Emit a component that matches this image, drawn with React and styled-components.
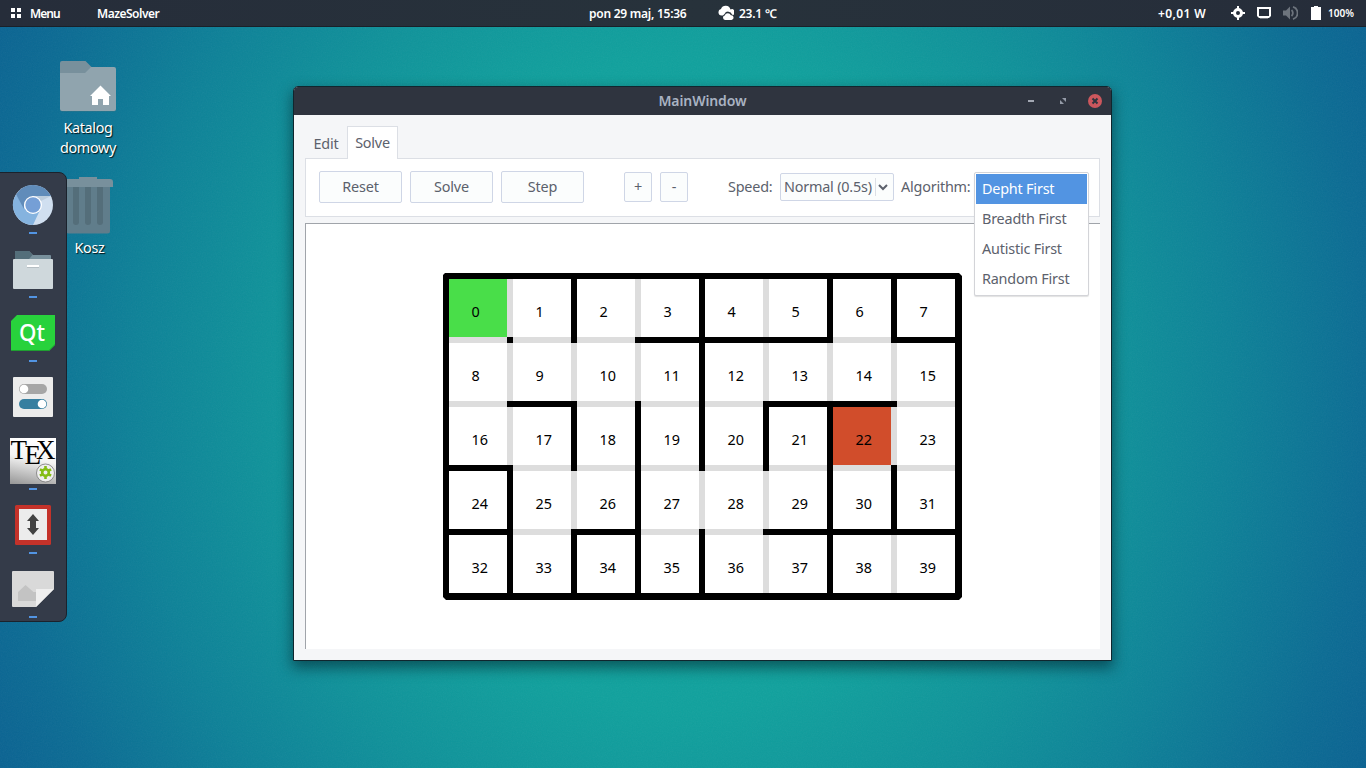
import React from "react";
import styled, { createGlobalStyle } from "styled-components";

const Global = createGlobalStyle`
  * { box-sizing: border-box; }
  html, body { margin: 0; padding: 0; overflow: hidden; }
  body { font-family: "Noto Sans", "Open Sans", sans-serif; }
`;

const Desktop = styled.div`
  position: relative;
  width: 1366px;
  height: 768px;
  overflow: hidden;
  background: radial-gradient(ellipse 760px 860px at 683px 384px,
    #0fa59e 0%, #10a19d 38%, #0f929a 56%, #0d8298 72%, #0b6c94 90%, #0a6392 100%);
`;

const Weave = styled.svg`
  position: absolute;
  inset: 0;
  opacity: 0.06;
`;

const TopBar = styled.header`
  position: relative;
  display: grid;
  grid-template-columns: 1fr auto 1fr;
  height: 27px;
  background: linear-gradient(90deg, #262d3a, #27323b 50%, #262d3a);
  border-bottom: 1px solid #1a2029;
  color: #fff;
  font-weight: 600;
  line-height: 25px;
  white-space: nowrap;
`;

const BarGroup = styled.div`
  display: flex;
  align-items: center;
  justify-content: ${(p) => (p.$end ? "flex-end" : "flex-start")};
  padding: 0 ${(p) => (p.$end ? 12 : 0)}px 0 ${(p) => (p.$end ? 0 : 11)}px;
  height: 26px;
  svg { display: block; flex: none; }
`;

const BarText = styled.span`
  display: block;
  width: ${(p) => p.$w}px;
  margin-left: ${(p) => p.$gap || 0}px;
  font-size: ${(p) => p.$size || 12}px;
  letter-spacing: ${(p) => p.$track || 0}px;
`;

const DesktopItem = styled.div`
  position: absolute;
  left: ${(p) => p.$x}px;
  top: ${(p) => p.$y}px;
  width: 80px;
  display: flex;
  flex-direction: column;
  align-items: center;
  color: #fff;
  font-size: 14.4px;
  letter-spacing: -0.35px;
  line-height: 20px;
  text-align: center;
  text-shadow: 1px 1px 1px rgba(0, 0, 0, 0.85);
  svg { display: block; }
`;

const DesktopLabel = styled.span`
  margin-top: ${(p) => p.$gap}px;
  padding-left: ${(p) => p.$nudge || 0}px;
`;

const Dock = styled.nav`
  position: absolute;
  left: -1px;
  top: 172px;
  width: 68px;
  height: 450px;
  padding-top: 9px;
  display: flex;
  flex-direction: column;
  background: #343b49;
  border: 1px solid #1b222c;
  border-radius: 0 8px 8px 0;
`;

const DockItem = styled.div`
  flex: none;
  height: 64px;
  width: 66px;
  display: flex;
  flex-direction: column;
  align-items: center;
  svg { display: block; overflow: visible; }
`;

const Running = styled.i`
  width: 8px;
  height: 2px;
  margin-top: 2px;
  background: #5294e2;
`;

const Window = styled.section`
  position: absolute;
  left: 293px;
  top: 86px;
  width: 819px;
  height: 575px;
  display: flex;
  flex-direction: column;
  background: #f5f6f8;
  border: 1px solid #10262e;
  border-radius: 5px 5px 0 0;
  box-shadow: 0 6px 14px 1px rgba(0, 20, 30, 0.5);
  color: #5c616c;
  font-size: 14.4px;
  letter-spacing: -0.2px;
`;

const TitleBar = styled.div`
  display: grid;
  grid-template-columns: 1fr auto 1fr;
  align-items: center;
  height: 28px;
  background: #2f343f;
  border-radius: 4px 4px 0 0;
  color: #a9b2c2;
  font-size: 14px;
  letter-spacing: -0.1px;
  font-weight: 600;
  line-height: 28px;
`;

const TitleText = styled.span`
  grid-column: 2;
`;

const WindowControls = styled.div`
  display: flex;
  justify-content: flex-end;
  padding-right: 7px;
  svg { display: block; }
`;

const Body = styled.div`
  display: flex;
  flex-direction: column;
  padding: 11px 11px 0;
`;

const Tabs = styled.div`
  display: flex;
  height: 33px;
  position: relative;
  z-index: 1;
  margin-bottom: -1px;
`;

const Tab = styled.div`
  width: ${(p) => p.$w}px;
  text-align: center;
  line-height: ${(p) => (p.$active ? 31 : 35)}px;
  ${(p) => p.$active && `
    background: #fff;
    border: 1px solid #dcdfe5;
    border-bottom: 0;
  `}
`;

const Toolbar = styled.div`
  display: flex;
  align-items: center;
  height: 59px;
  padding: 0 13px 2px;
  background: #fff;
  border: 1px solid #dcdfe5;
`;

const Button = styled.button`
  width: ${(p) => (p.$small ? 28 : 83)}px;
  height: ${(p) => (p.$small ? 30 : 32)}px;
  margin: 0 ${(p) => (p.$after === undefined ? 8 : p.$after)}px 0 0;
  padding: 0 0 1px;
  flex: none;
  background: #fbfdfd;
  border: 1px solid #cfd6e6;
  border-radius: 2px;
  color: #5c616c;
  font: inherit;
  letter-spacing: -0.15px;
`;

const FieldLabel = styled.span`
  width: ${(p) => p.$w}px;
  flex: none;
  line-height: 19px;
  white-space: nowrap;
`;

const Select = styled.div`
  display: flex;
  align-items: center;
  width: 114px;
  height: 28px;
  margin-right: 7px;
  padding-left: 3px;
  background: #fbfdfd;
  border: 1px solid #cfd6e6;
  border-radius: 2px;
  white-space: nowrap;
`;

const SelectValue = styled.span`
  width: 91px;
  line-height: 19px;
`;

const SelectArrow = styled.span`
  display: flex;
  align-items: center;
  height: 18px;
  padding: 1px 0 0 2px;
  border-left: 1px solid #dcdfe5;
`;

const Popup = styled.ul`
  position: absolute;
  left: 680px;
  top: 85px;
  width: 115px;
  height: 124px;
  margin: 0;
  padding: 1px;
  z-index: 3;
  list-style: none;
  background: #fff;
  border: 1px solid #d3d4d8;
  border-radius: 2px;
  box-shadow: 0 1px 1px rgba(0, 0, 0, 0.12);
`;

const Option = styled.li`
  height: 30px;
  padding-left: 6px;
  line-height: 29px;
  background: ${(p) => (p.$on ? "#5294e2" : "#fff")};
  color: ${(p) => (p.$on ? "#fff" : "#5c616c")};
`;

const Canvas = styled.div`
  display: flex;
  justify-content: flex-start;
  height: 426px;
  margin-top: 6px;
  padding: 49px 0 0 137px;
  background: #fff;
  border: solid #a0a4aa;
  border-width: 1px 0 0 1px;
`;

const Maze = styled.div`
  display: grid;
  grid-template-columns: repeat(7, 58px 6px) 58px;
  grid-template-rows: repeat(4, 58px 6px) 58px;
  width: 519px;
  height: 327px;
  padding: 6px 7px 7px 6px;
  background: #000;
  clip-path: polygon(2px 0, 516px 0, 519px 3px, 519px 324px, 516px 327px, 3px 327px, 0 324px, 0 2px);
`;

const Cell = styled.div`
  padding-left: 22.5px;
  line-height: 65px;
  letter-spacing: 0;
  height: 58px;
  background: ${(p) => p.$fill};
  color: #000;
`;

const Passage = styled.div`
  background: ${(p) => (p.$open ? "#ddd" : "#000")};
`;

/* 1 marks a wall: SIDE is to the right of a cell, BELOW is under it */
const SIDE = ["0101011", "0001000", "0111110", "1010011", "1111010"];
const BELOW = ["00011101", "01000110", "10000000", "10100111"];
const FILL = { 0: "#49de49", 22: "#d14d2b" };

function mazeParts() {
  const parts = [];
  for (let r = 0; r < 5; r++) {
    for (let c = 0; c < 8; c++) {
      const n = r * 8 + c;
      parts.push(<Cell key={n} $fill={FILL[n] || "#fff"}>{n}</Cell>);
      if (c < 7) parts.push(<Passage key={`s${n}`} $open={SIDE[r][c] === "0"} />);
    }
    if (r < 4) {
      for (let c = 0; c < 8; c++) {
        parts.push(<Passage key={`b${r}-${c}`} $open={BELOW[r][c] === "0"} />);
        if (c < 7) parts.push(<Passage key={`j${r}-${c}`} />);
      }
    }
  }
  return parts;
}

const HomeFolder = () => (
  <svg width="58" height="52" viewBox="0 0 58 52">
    <rect x="1" y="8" width="56" height="43.5" rx="2" fill="#4a7480" opacity=".6" />
    <path d="M1 3a2 2 0 0 1 2-2h23.500l6 6H55v20H1z" fill="#78909c" />
    <path d="M1 13h25l6-6h23a2 2 0 0 1 2 2v40a2 2 0 0 1-2 2H3a2 2 0 0 1-2-2z" fill="#90a4ae" />
    <path d="M41.500 25.500 31 36h2v9h6v-6h5v6h6v-9h2z" fill="#fff" />
  </svg>
);

const Trash = () => (
  <svg width="50" height="58" viewBox="0 0 50 58">
    <path d="M3 9h44v45a2.500 2.500 0 0 1-2.500 2.500h-39A2.500 2.500 0 0 1 3 54z" fill="#607d8b" />
    <path d="M16 0h18v2h13a3 3 0 0 1 3 3v5H0V5a3 3 0 0 1 3-3h13z" fill="#78909c" />
    <path d="M10 10h6v35a3 3 0 0 1-6 0zM22 10h6v35a3 3 0 0 1-6 0zM34 10h6v35a3 3 0 0 1-6 0z" fill="#546e7a" />
  </svg>
);

const Chromium = () => (
  <svg width="48" height="48" viewBox="0 1 48 48">
    <circle cx="24" cy="24" r="20" fill="#d0dff0" />
    <path d="M24 44A20 20 0 0 1 7 13.500L16 28l15 1z" fill="#85b3df" />
    <path d="M7 13.500A20 20 0 0 1 42 15H24l-9 9v4z" fill="#608cba" />
    <path d="M24 15h18l-10 5z" fill="#bccddd" />
    <circle cx="24" cy="24" r="9" fill="#fff" />
    <circle cx="24" cy="24" r="7.700" fill="#759fd6" />
  </svg>
);

const Files = () => (
  <svg width="48" height="48" viewBox="0 0 48 48">
    <path d="M6 6a1 1 0 0 1 1-1h13l4 4h17a1 1 0 0 1 1 1v5H6z" fill="#78909c" />
    <path d="M6 6a1 1 0 0 1 1-1h13l3.500 4L20 13H6z" fill="#546e7a" />
    <rect x="4" y="13" width="40" height="30" rx="1" fill="#cfd8dc" />
    <path d="M18 19h12v2H18z" fill="#fff" /><path d="M18 21h12v1H18z" fill="#b5bec3" />
  </svg>
);

const Glyph = styled.text`
  font-family: "Noto Sans", sans-serif;
  font-weight: 500;
`;

const SerifGlyph = styled.text`
  font-family: "Liberation Serif", serif;
  font-size: 27px;
`;

const QtIcon = () => (
  <svg width="48" height="48" viewBox="0 0 48 48">
    <path d="M8 5h38v30l-6 6H2V11z" fill="#28d23c" />
    <path d="M2 40h38l6-6v1l-6 6H2z" fill="#1f9f31" />
    <Glyph x="23" y="31" fontSize="24" fill="#fff" textAnchor="middle" textLength="26" lengthAdjust="spacingAndGlyphs">Qt</Glyph>
  </svg>
);

const Tweaks = () => (
  <svg width="48" height="48" viewBox="0 0 48 48">
    <rect x="4" y="3" width="40" height="40" rx="1" fill="#ececec" />
    <rect x="10" y="10" width="28" height="10" rx="5" fill="#a6a6a6" />
    <circle cx="15" cy="15" r="4.300" fill="#fff" />
    <rect x="10" y="25" width="28" height="10" rx="5" fill="#377fa0" />
    <circle cx="33" cy="30" r="4.300" fill="#fff" />
  </svg>
);

const TexIcon = () => (
  <svg width="48" height="48" viewBox="0 0 48 48">
    <defs>
      <linearGradient id="tex" x1="0.300" y1="0" x2="0.100" y2="1">
        <stop offset="0" stopColor="#fff" /><stop offset=".4" stopColor="#f4f4f4" /><stop offset="1" stopColor="#999" />
      </linearGradient>
    </defs>
    <rect x="1" y="0" width="46" height="46" fill="url(#tex)" />
    <SerifGlyph x="1.500" y="20.500">T<tspan dx="-2.500" dy="5">E</tspan><tspan dx="-5" dy="-5">X</tspan></SerifGlyph>
    <circle cx="36.500" cy="35" r="9" fill="#eee" stroke="#777" strokeWidth=".8" />
    <circle cx="36.500" cy="34.500" r="3.300" fill="none" stroke="#84bd14" strokeWidth="2.600" />
    <path d="M36.500 28v3M36.500 38v3M30.900 31.300l2.500 1.400M39.600 36.300l2.500 1.400M42.100 31.300l-2.500 1.400M33.400 36.300l-2.500 1.400" stroke="#84bd14" strokeWidth="2.600" />
  </svg>
);

const ResizeIcon = () => (
  <svg width="48" height="48" viewBox="0 0 48 48">
    <rect x="6" y="3" width="36" height="40" rx="1.500" fill="#c4322a" />
    <rect x="10" y="7" width="28" height="31" fill="#ececec" />
    <path d="M24 12l6 7h-3v7h3l-6 7-6-7h3v-7h-3z" fill="#424242" />
  </svg>
);

const ImageIcon = () => (
  <svg width="48" height="48" viewBox="0 0 48 48">
    <path d="M4 5h40a1 1 0 0 1 1 1v17L27 41H4a1 1 0 0 1-1-1V6a1 1 0 0 1 1-1z" fill="#d9d9d9" />
    <path d="M9 35V26l7.500-7 8 7h2.500v9z" fill="#c3c3c3" />
    <path d="M27 23h18L27 41z" fill="#efefef" />
  </svg>
);

const DOCK = [
  { Icon: Chromium, running: true },
  { Icon: Files, running: true },
  { Icon: QtIcon, running: true },
  { Icon: Tweaks, running: false },
  { Icon: TexIcon, running: true },
  { Icon: ResizeIcon, running: true },
  { Icon: ImageIcon, running: true },
];

export default function App() {
  return (
    <Desktop>
      <Global />
      <Weave width="1366" height="768">
        <filter id="grain"><feTurbulence type="fractalNoise" baseFrequency="0.8" numOctaves="2" seed="4" /><feColorMatrix type="saturate" values="0" /></filter>
        <rect width="1366" height="768" filter="url(#grain)" />
      </Weave>
      <TopBar>
        <BarGroup>
          <svg width="10" height="10" viewBox="0 0 10 10"><path d="M0 0h4v4H0zM6 0h4v4H6zM0 6h4v4H0zM6 6h4v4H6z" fill="#fff" /></svg>
          <BarText $gap={9} $w={67} $track={-0.9}>Menu</BarText>
          <BarText $w={80} $track={-0.5}>MazeSolver</BarText>
        </BarGroup>
        <BarGroup>
          <BarText $w={129} $track={-0.25}>pon 29 maj, 15:36</BarText>
          <svg width="16" height="16" viewBox="0 0 16 16">
            <path d="M3.500 10.500A3.300 3.300 0 0 1 3 4 5 5 0 0 1 12.500 4.500a3 3 0 0 1 2.500 5.500l-1-.5a4 4 0 0 0-7.500-.5L5 10.500z" fill="#fff" />
            <path d="M7 15a2.300 2.300 0 0 1-.3-4.500 3.300 3.300 0 0 1 6.200-.2A2.300 2.300 0 0 1 13.500 15z" fill="#fff" />
          </svg>
          <BarText $gap={5} $w={49} $track={-0.25}>23.1 ℃</BarText>
        </BarGroup>
        <BarGroup $end>
          <BarText $w={73} $track={0.4}>+0,01 W</BarText>
          <svg width="14" height="14" viewBox="0 0 14 14"><circle cx="7" cy="7" r="3.500" fill="none" stroke="#fff" strokeWidth="3" /><path d="M7 0v3M7 11v3M0 7h3M11 7h3" stroke="#fff" strokeWidth="2" /></svg>
          <svg width="37" height="14" viewBox="0 0 37 14"><path d="M13 2h12v9h-12z" fill="none" stroke="#fff" strokeWidth="2" /><path d="M12 12v-2l2 2zM26 12v-2l-2 2z" fill="#27303b" /><path d="M15 10h8v3h-8z" fill="#fff" opacity=".35" /></svg>
          <svg width="16" height="16" viewBox="0 0 16 16" fill="none" stroke="#6d747d" strokeWidth="1.800"><path d="M1 5.500h3l4-4v13l-4-4H1z" fill="#6d747d" stroke="none" /><path d="M9.500 5a4 4 0 0 1 0 6M11 1.800a6.500 6.500 0 0 1 0 12.400" /></svg>
          <svg width="28" height="14" viewBox="0 0 28 14"><path d="M16 0h4v1h3v13H13V1h3z" fill="#fff" /></svg>
          <BarText $gap={2} $w={26} $size={10}>100%</BarText>
        </BarGroup>
      </TopBar>

      <DesktopItem $x={48} $y={60}><HomeFolder /><DesktopLabel $gap={6}>Katalog domowy</DesktopLabel></DesktopItem>
      <DesktopItem $x={48} $y={177}><Trash /><DesktopLabel $gap={3} $nudge={3}>Kosz</DesktopLabel></DesktopItem>

      <Dock>
        {DOCK.map(({ Icon, running }, i) => (
          <DockItem key={i}><Icon />{running && <Running />}</DockItem>
        ))}
      </Dock>

      <Window>
        <TitleBar>
          <TitleText>MainWindow</TitleText>
          <WindowControls>
            <svg width="84" height="16" viewBox="0 0 84 16">
              <path d="M8 7h6v2H8z" fill="#a3a8b3" />
              <path d="M42 5h4v4zM40 7v4h4z" fill="#959ba8" />
              <circle cx="75" cy="8" r="7" fill="#cc575d" />
              <path d="M72.500 5.500l5 5M77.500 5.500l-5 5" stroke="#2f343f" strokeWidth="2" />
            </svg>
          </WindowControls>
        </TitleBar>
        <Body>
          <Tabs>
            <Tab $w={42}>Edit</Tab>
            <Tab $w={51} $active>Solve</Tab>
          </Tabs>
          <Toolbar>
            <Button>Reset</Button>
            <Button>Solve</Button>
            <Button $after={40}>Step</Button>
            <Button $small>+</Button>
            <Button $small $after={40}>-</Button>
            <FieldLabel $w={52}>Speed:</FieldLabel>
            <Select>
              <SelectValue>Normal (0.5s)</SelectValue>
              <SelectArrow>
                <svg width="10" height="7" viewBox="0 0 10 7"><path d="M1 1l4 4 4-4" fill="none" stroke="#5c616c" strokeWidth="2" /></svg>
              </SelectArrow>
            </Select>
            <FieldLabel $w={70}>Algorithm:</FieldLabel>
          </Toolbar>
          <Canvas><Maze>{mazeParts()}</Maze></Canvas>
        </Body>
        <Popup>
          <Option $on>Depht First</Option>
          <Option>Breadth First</Option>
          <Option>Autistic First</Option>
          <Option>Random First</Option>
        </Popup>
      </Window>
    </Desktop>
  );
}
